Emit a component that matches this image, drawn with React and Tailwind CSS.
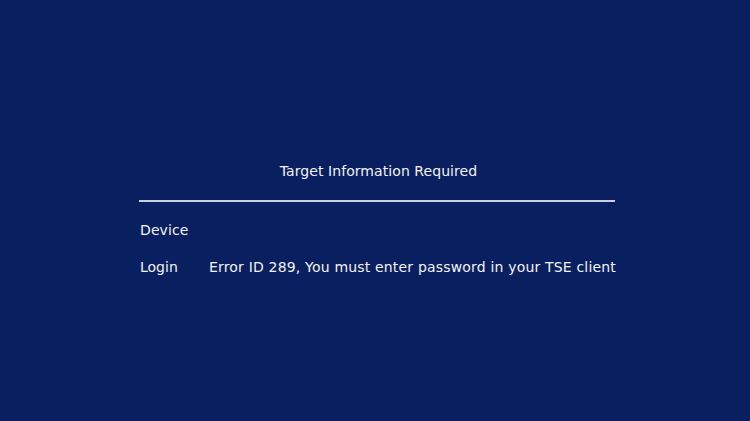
export default function App() {
  return (
    <div
      className="w-[750px] h-[421px] bg-[#0a1f5f] text-[#f2f2f2] overflow-hidden"
      style={{ fontFamily: '"DejaVu Sans", sans-serif' }}
    >
      <div className="ml-[139px] w-[476px] pt-[161px]">
        <div className="text-center text-[14px] leading-[20px] pl-[3px] tracking-[0.07px]">Target Information Required</div>
        <div className="mt-[19px] h-[2px] bg-[#c9d0e6]" />
        <div className="mt-[18px] text-[14px] leading-[20px] pl-[1px] tracking-[0.1px]">Device</div>
        <div className="mt-[17px] flex text-[14px] leading-[20px] pl-[1px]">
          <span className="w-[69px] shrink-0">Login</span>
          <span className="tracking-[0.18px] whitespace-nowrap">Error ID 289, You must enter password in your TSE client</span>
        </div>
      </div>
    </div>
  );
}
